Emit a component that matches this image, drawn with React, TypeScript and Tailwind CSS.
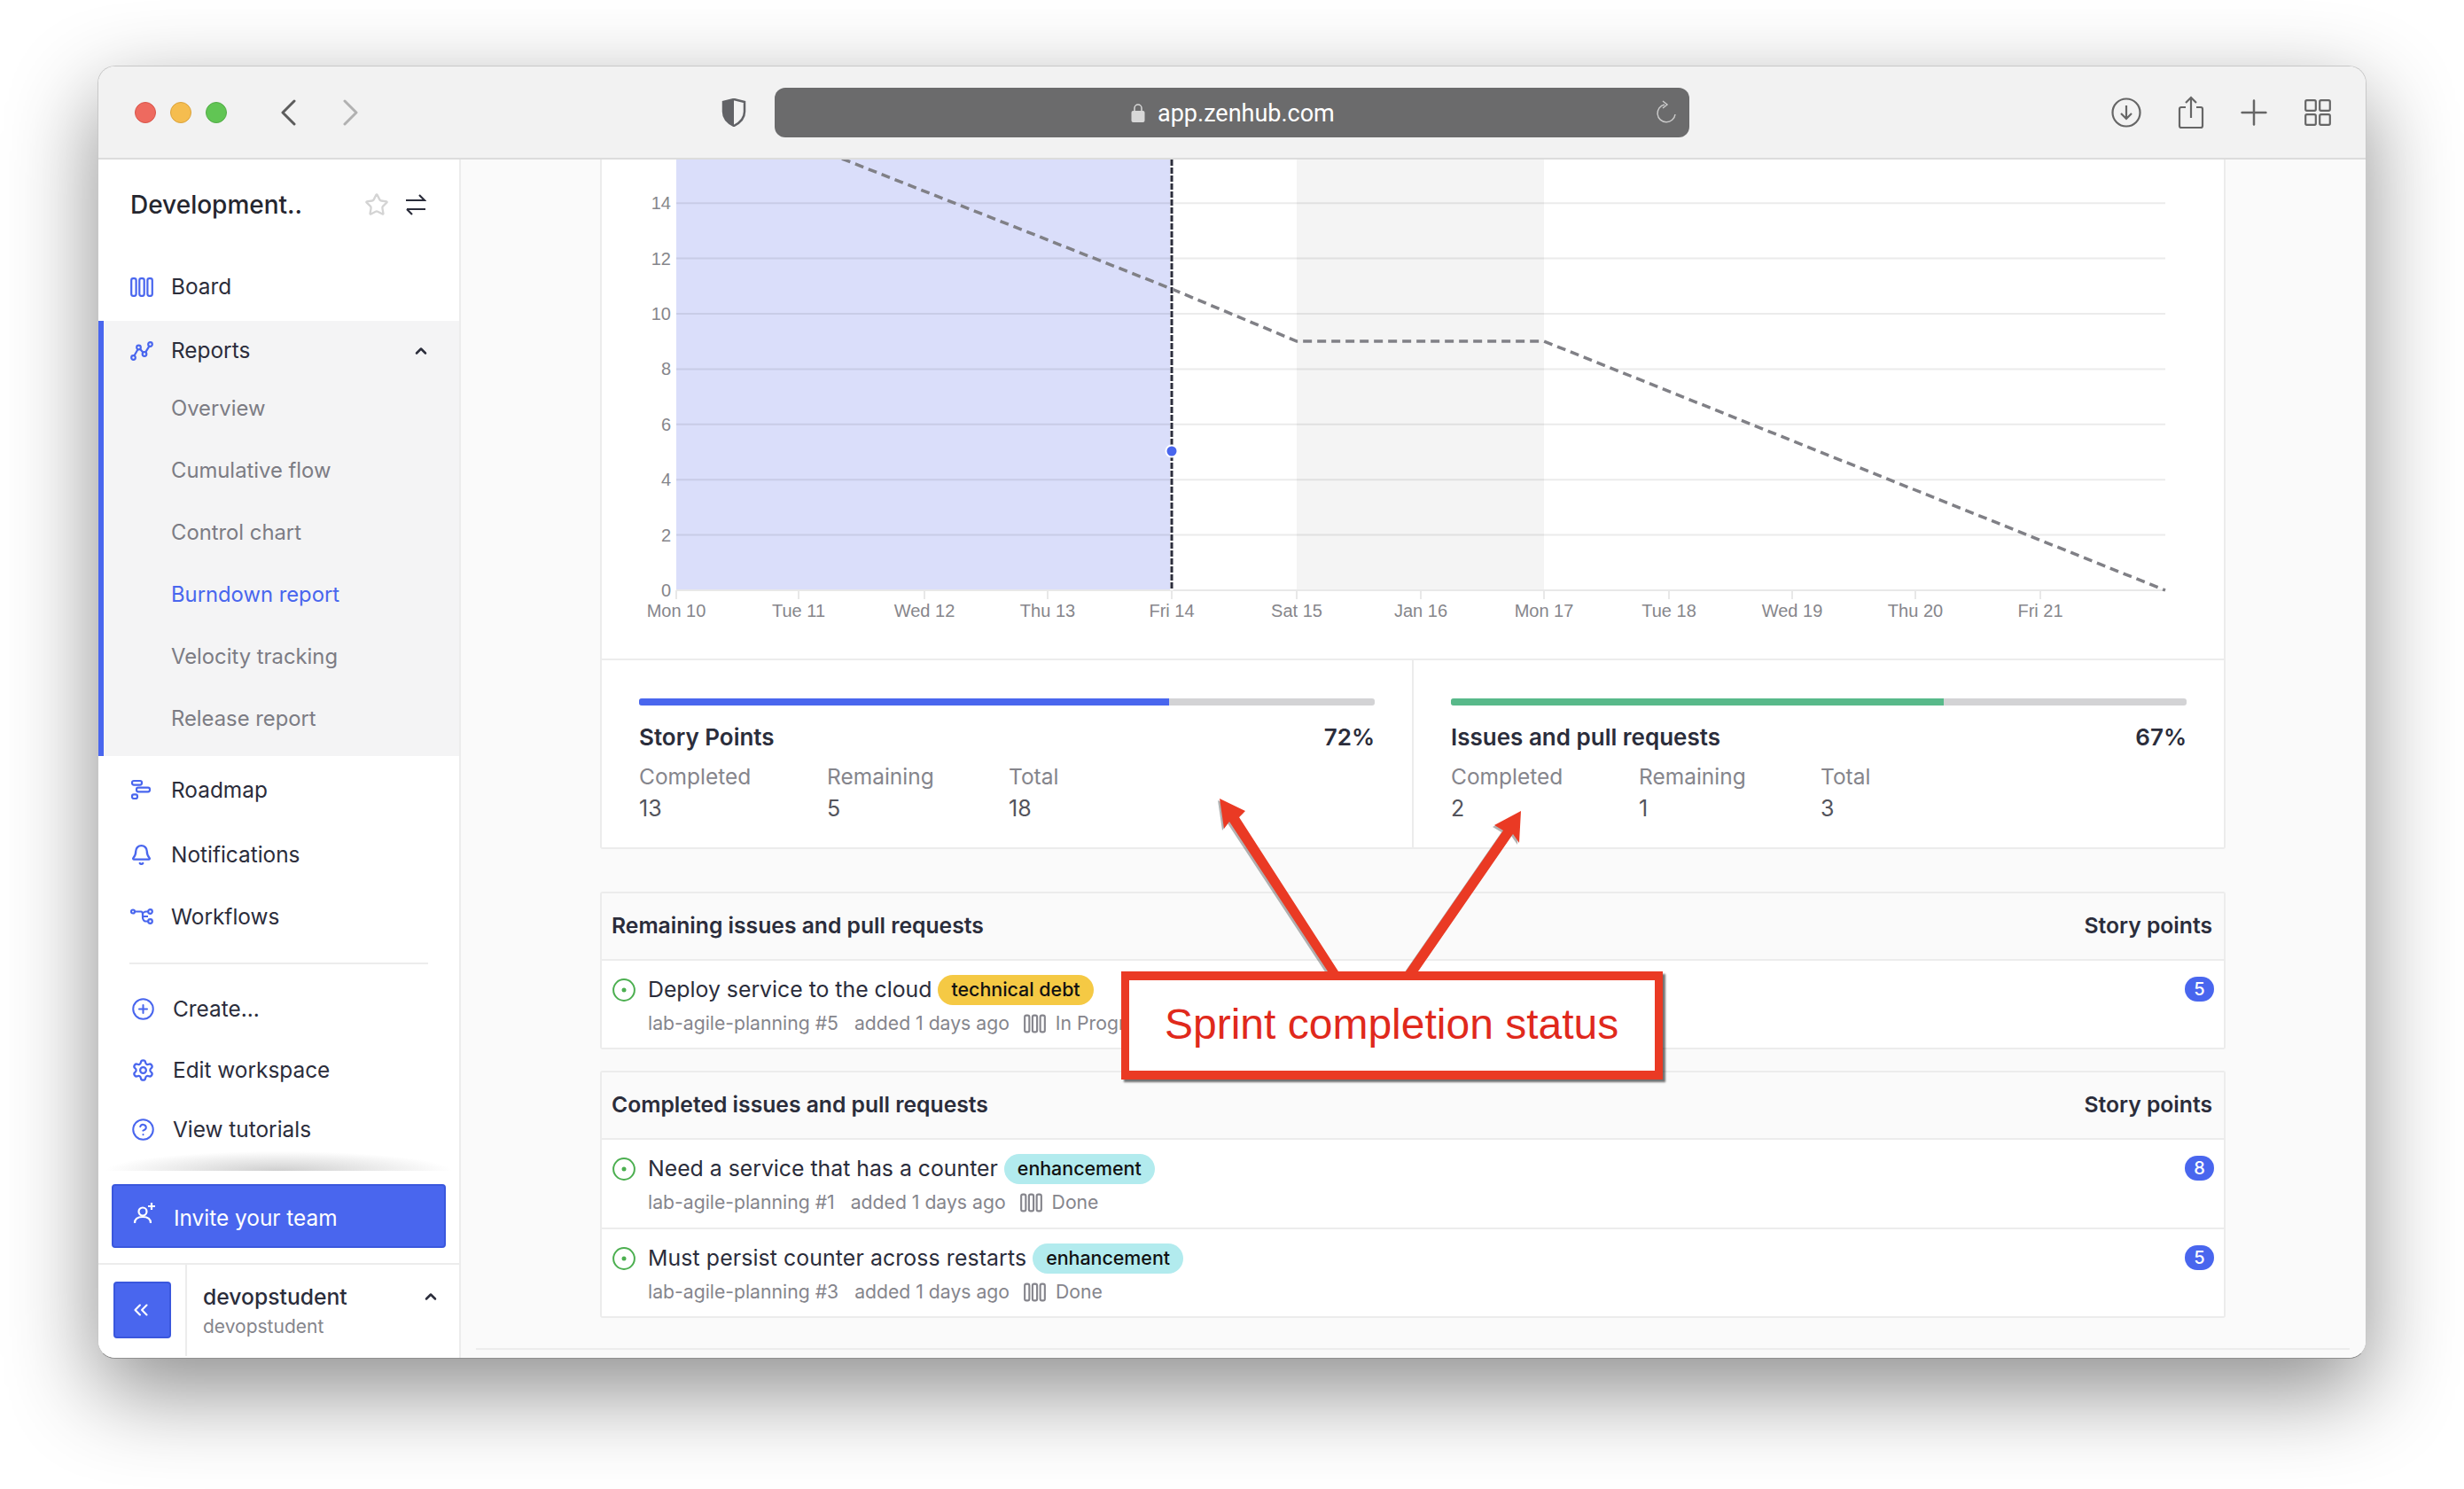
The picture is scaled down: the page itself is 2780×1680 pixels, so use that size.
import React from 'react';
import { Bell, ChevronUp, ChevronsLeft, CircleHelp, CirclePlus, Plus, Settings, Star } from 'lucide-react';

const ticks = [
    ['Mon 10', 763], ['Tue 11', 901], ['Wed 12', 1043], ['Thu 13', 1182], ['Fri 14', 1322], ['Sat 15', 1463],
    ['Jan 16', 1603], ['Mon 17', 1742], ['Tue 18', 1883], ['Wed 19', 2022], ['Thu 20', 2161], ['Fri 21', 2302],
] as const;

const BoardIcon = ({ className = '' }: { className?: string }) => (
    <svg viewBox="0 0 26 22" fill="none" stroke="currentColor" strokeWidth="2.2" className={className}>
        <rect x="1.2" y="1.2" width="5.4" height="19.6" rx="2" />
        <rect x="10.3" y="1.2" width="5.4" height="19.6" rx="2" />
        <rect x="19.4" y="1.2" width="5.4" height="19.6" rx="2" />
    </svg>
);

const ReportsIcon = () => (
    <svg viewBox="0 0 26 22" fill="none" stroke="#4966ee" strokeWidth="2.2" className="w-[26px] h-[22px]">
        <circle cx="3.5" cy="18.5" r="2.3" />
        <circle cx="9.5" cy="7" r="2.3" />
        <circle cx="16" cy="14.5" r="2.3" />
        <circle cx="22.5" cy="3.5" r="2.3" />
        <path d="M4.5 16.3 8.5 9.2M11 8.8l3.5 3.9M17.2 12.4l4.2-6.8" />
    </svg>
);

const RoadmapIcon = () => (
    <svg viewBox="0 0 24 24" fill="none" stroke="#4966ee" strokeWidth="2.2" className="w-6 h-6">
        <rect x="2" y="2" width="11" height="4.6" rx="2" />
        <rect x="7" y="9.7" width="15" height="4.6" rx="2" />
        <rect x="2" y="17.4" width="6" height="4.6" rx="2" />
    </svg>
);

const WorkflowIcon = () => (
    <svg viewBox="0 0 26 18" fill="none" stroke="#4966ee" strokeWidth="2.2" className="w-[26px] h-[18px]">
        <circle cx="3" cy="3.5" r="2" />
        <circle cx="22.5" cy="3.5" r="2.3" />
        <circle cx="22.5" cy="14.5" r="2.3" />
        <path d="M5 3.5h7c2 0 2 2 2 3.5v3c0 3 2 4.500 3 4.500h3M14 7c0-2 2-3.500 4-3.500h2M14 9h6" />
    </svg>
);

const IssueDot = () => (
    <svg viewBox="0 0 26 26" className="w-[26px] h-[26px] shrink-0">
        <circle cx="13" cy="13" r="11.900" fill="none" stroke="#4caf50" strokeWidth="2" />
        <circle cx="13" cy="13" r="2.500" fill="#4caf50" />
    </svg>
);

const NavRow = ({ icon, label, h }: { icon: React.ReactNode; label: string; h: string }) => (
    <div className={`flex items-center ${h} pl-[36px] text-[24.400px] text-[#2b2d3b]`}>
        <span className="w-[46px] flex items-center">{icon}</span>
        {label}
    </div>
);

const ActionRow = ({ icon, label, h }: { icon: React.ReactNode; label: string; h: string }) => (
    <div className={`flex items-center ${h} pl-[37px] text-[24.400px] text-[#2b2d3b]`}>
        <span className="w-[47px] flex items-center">{icon}</span>
        {label}
    </div>
);

const Sidebar = () => (
    <aside className="w-[409px] shrink-0 flex flex-col bg-white border-r-2 border-[#ececec]">
        <div className="h-[102px] flex items-center pl-[36px] pr-[37px]">
            <span className="text-[28px] font-medium text-[#25262f]">Development..</span>
            <Star className="ml-auto text-[#d4d4d4]" size={28} strokeWidth={2} />
            <svg viewBox="0 0 24 24" fill="none" stroke="#2b2d3b" strokeWidth="2.2" className="w-6 h-[28px] ml-[18px]">
                <path d="M1 7h21M16 1l6 6-6 0M23 17H2M8 23l-6-6" />
            </svg>
        </div>
        <NavRow icon={<BoardIcon className="w-[26px] h-[22px] text-[#4966ee]" />} label="Board" h="h-[80px] pt-[3px]" />
        <div className="border-l-[6px] border-[#4966ee] bg-[#f4f4f5] pb-[7px]">
            <div className="h-[64px] flex items-center pl-[30px] pr-[33px] pt-[3px] text-[24.400px] text-[#2b2d3b]">
                <span className="w-[46px] flex items-center"><ReportsIcon /></span>
                Reports
                <ChevronUp className="ml-auto" size={20} strokeWidth={3} />
            </div>
            {['Overview', 'Cumulative flow', 'Control chart', 'Burndown report', 'Velocity tracking', 'Release report'].map((item) => (
                <div key={item} className={`h-[70px] flex items-center pl-[76px] text-[23.800px] ${item === 'Burndown report' ? 'text-[#4966ee]' : 'text-[#7c7c84]'}`}>
                    {item}
                </div>
            ))}
        </div>
        <NavRow icon={<RoadmapIcon />} label="Roadmap" h="h-[76px]" />
        <NavRow icon={<Bell className="text-[#4966ee]" size={25} strokeWidth={2.2} />} label="Notifications" h="h-[70px]" />
        <NavRow icon={<WorkflowIcon />} label="Workflows" h="h-[70px]" />
        <div className="mt-[17px] mx-[35px] h-[2px] bg-[#ececec]" />
        <div className="mt-[16px]">
            <ActionRow icon={<CirclePlus className="text-[#4966ee]" size={27} strokeWidth={1.800} />} label="Create..." h="h-[68px]" />
            <ActionRow icon={<Settings className="text-[#4966ee]" size={27} strokeWidth={2} />} label="Edit workspace" h="h-[70px]" />
            <ActionRow icon={<CircleHelp className="text-[#4966ee]" size={27} strokeWidth={1.800} />} label="View tutorials" h="h-[64px]" />
        </div>
        <div className="-mt-[7px] h-[22px] mx-[8px] bg-[radial-gradient(ellipse_50%_100%_at_50%_100%,#cfcfcf,transparent)]" />
        <button className="mt-[15px] mx-[15px] h-[72px] flex items-center pl-[22px] rounded-[4px] bg-[#4966ee] border-2 border-[#3a57dd] text-[24.400px] text-white">
            <svg viewBox="0 0 26 26" fill="none" stroke="white" strokeWidth="2.200" className="w-[26px] h-[26px] mr-[20px] -mt-[6px]">
                <circle cx="11" cy="11" r="4.500" />
                <path d="M2 24c0-5 4-7 9-7s9 2 9 7M21 1v8M17 5h8" />
            </svg>
            <span className="mt-[4px]">Invite your team</span>
        </button>
        <div className="mt-[17px] flex flex-1 border-t-2 border-[#ececec]">
            <div className="w-[98px] shrink-0 pt-[19px] pl-[17px]">
                <div className="w-[65px] h-[64px] flex items-center justify-center rounded-[4px] bg-[#4966ee] border-2 border-[#3a57dd] pr-1 text-white">
                    <ChevronsLeft size={26} strokeWidth={2} />
                </div>
            </div>
            <div className="w-[2px] mb-[2px] bg-[#ececec]" />
            <div className="flex-1 pl-[18px] pr-[22px] pt-[19px]">
                <div className="flex items-center justify-between text-[24.700px] font-medium leading-[34px] text-[#2b2d3b]">
                    devopstudent
                    <ChevronUp size={20} strokeWidth={3} />
                </div>
                <div className="text-[21px] leading-[30px] text-[#85858c] mt-[2px]">devopstudent</div>
            </div>
        </div>
    </aside>
);

const BurndownChart = () => (
    <svg viewBox="679 180 1830 563" className="block w-[1830px] h-[563px] font-['Liberation_Sans',sans-serif]">
        <rect x="763" y="180" width="559" height="486" fill="#dadefa" />
        <rect x="1463" y="180" width="279" height="486" fill="#f4f4f4" />
        {[14, 12, 10, 8, 6, 4, 2, 0].map((v) => (
            <g key={v}>
                <line x1="763" x2="2443" y1={666 - v * 31.2} y2={666 - v * 31.2} stroke={v === 0 ? '#e8e8e8' : '#000'} strokeOpacity={v === 0 ? 1 : 0.08} strokeWidth="2" />
                <text x="757" y={666 - v * 31.2 + 7} textAnchor="end" fontSize="20" fill="#86868b">{v}</text>
            </g>
        ))}
        {ticks.map(([label, x]) => (
            <g key={label}>
                <line x1={x} x2={x} y1="666" y2="676" stroke="#e8e8e8" strokeWidth="2" />
                <text x={x} y="696" textAnchor="middle" fontSize="20" fill="#86868b">{label}</text>
            </g>
        ))}
        <polyline points="950,179 1322,326 1463,385 1742,385 2443,666" fill="none" stroke="#808086" strokeWidth="3.500" strokeDasharray="10 6" />
        <line x1="1322" x2="1322" y1="180" y2="666" stroke="#fff" strokeWidth="4" />
        <line x1="1322" x2="1322" y1="180" y2="666" stroke="#2b2d3b" strokeWidth="3" strokeDasharray="7 2" />
        <circle cx="1322" cy="509" r="6.500" fill="#4966ee" stroke="#fff" strokeWidth="2" />
    </svg>
);

const Stat = ({ title, pct, fill, color, values }: { title: string; pct: string; fill: string; color: string; values: string[] }) => (
    <div className="flex-1 px-[42px] pt-[43px]">
        <div className="h-2 rounded-[3px] bg-[#d3d3d5] overflow-hidden">
            <div className={`h-full ${fill} ${color}`} />
        </div>
        <div className="mt-[19px] flex justify-between text-[26px] leading-[34px] font-semibold text-[#2b2d3b]">
            <span>{title}</span>
            <span>{pct}</span>
        </div>
        <div className="mt-[12px] grid grid-cols-[212px_205px_1fr] text-[24.500px] leading-[30px] text-[#85858c]">
            <span>Completed</span>
            <span>Remaining</span>
            <span>Total</span>
        </div>
        <div className="mt-[6px] grid grid-cols-[212px_205px_1fr] text-[25px] leading-[30px] text-[#53545c]">
            {values.map((v) => <span key={v}>{v}</span>)}
        </div>
    </div>
);

const Issue = ({ title, titleClass = '', tag, tagColor, meta, added, column, points, border }: { title: string; titleClass?: string; tag: string; tagColor: string; meta: string; added: string; column: string; points: string; border?: boolean }) => (
    <div className={`flex pl-[12px] pr-[11px] bg-white ${border ? 'h-[101px] border-b-2 border-[#ececec]' : 'h-[98px]'}`}>
        <div className="flex-1 min-w-0">
            <div className="mt-[15px] h-[35px] flex items-center">
                <IssueDot />
                <span className={`ml-[14px] text-[24.800px] text-[#2b2d3b] ${titleClass}`}>{title}</span>
                <span className={`ml-[7px] h-[34px] px-[15px] flex items-center rounded-full text-[21.400px] font-medium text-[#111] ${tagColor}`}>{tag}</span>
            </div>
            <div className="mt-[6px] h-[30px] pl-[40px] flex items-center text-[21.200px] text-[#85858c]">
                <span>{meta}</span>
                <span className="ml-[18px]">{added}</span>
                <BoardIcon className="ml-[16px] mr-[11px] w-[25px] h-[22px]" />
                <span>{column}</span>
            </div>
        </div>
        <span className="mt-[18px] w-[33px] h-[28px] flex items-center justify-center rounded-full bg-[#4966ee] text-[20px] font-medium text-white">{points}</span>
    </div>
);

const IssueCard = ({ heading, className, children }: { heading: string; className: string; children: React.ReactNode }) => (
    <section className={`border-2 border-[#ececec] rounded-[3px] ${className}`}>
        <div className="h-[76px] flex items-center justify-between pl-[11px] pr-[13px] bg-[#fafafa] border-b-2 border-[#ececec] text-[24.700px] font-semibold text-[#2b2d3b]">
            <span>{heading}</span>
            <span>Story points</span>
        </div>
        {children}
    </section>
);

const Toolbar = () => (
    <header className="h-[105px] shrink-0 flex items-center bg-[#f2f2f2] border-b-2 border-[#dcdcdc]">
        <div className="ml-[41px] flex gap-4">
            <span className="w-6 h-6 rounded-full bg-[#ee6a5f] border border-[#d8554a]" />
            <span className="w-6 h-6 rounded-full bg-[#f5bd4f] border border-[#dba33c]" />
            <span className="w-6 h-6 rounded-full bg-[#61c554] border border-[#52ab47]" />
        </div>
        <svg viewBox="0 0 20 30" fill="none" stroke="#5c5c5c" strokeWidth="3" strokeLinecap="round" strokeLinejoin="round" className="ml-[59px] w-5 h-[30px]">
            <path d="M17 2 4 15l13 13" />
        </svg>
        <svg viewBox="0 0 20 30" fill="none" stroke="#b1b1b1" strokeWidth="3" strokeLinecap="round" strokeLinejoin="round" className="ml-[51px] w-5 h-[30px]">
            <path d="m3 2 13 13L3 28" />
        </svg>
        <svg viewBox="0 0 28 32" className="ml-[408px] w-[28px] h-[32px]">
            <path d="M14 1 2 4v11c0 8 6 13 12 16 6-3 12-8 12-16V4z" fill="none" stroke="#626367" strokeWidth="2.500" />
            <path d="M14 1 2 4v11c0 8 6 13 12 16z" fill="#626367" />
        </svg>
        <div className="ml-[32px] w-[1032px] h-[56px] flex items-center rounded-[12px] bg-[#6b6b6c] pl-[402px] pr-[14px] text-white">
            <svg viewBox="0 0 16 22" className="w-4 h-[22px] text-[#d8d8d8]">
                <path d="M4 10V6a4 4 0 0 1 8 0v4" fill="none" stroke="currentColor" strokeWidth="1.500" />
                <rect x="0.500" y="9" width="15" height="13" rx="2" fill="currentColor" />
            </svg>
            <span className="ml-[14px] mt-[3px] text-[27px] font-[Roboto,sans-serif]">app.zenhub.com</span>
            <svg viewBox="0 0 24 28" fill="none" stroke="#c9c9c9" strokeWidth="1.500" className="ml-auto w-6 h-7">
                <path d="M10 5a10 10 0 1 0 12 11M8 1l5 4-5 4" />
            </svg>
        </div>
        <svg viewBox="0 0 34 34" fill="none" stroke="#666" strokeWidth="2.200" className="ml-[476px] w-[34px] h-[34px]">
            <circle cx="17" cy="17" r="15.500" />
            <path d="M17 9v15M11 18l6 6 6-6" />
        </svg>
        <svg viewBox="0 0 30 38" fill="none" stroke="#666" strokeWidth="2.200" className="ml-[41px] w-[30px] h-[38px]">
            <path d="M9 13H4a2 2 0 0 0-2 2v19a2 2 0 0 0 2 2h22a2 2 0 0 0 2-2V15a2 2 0 0 0-2-2h-5M15 25V2M9 8l6-6 6 6" />
        </svg>
        <Plus className="ml-[33px] text-[#666]" size={46} strokeWidth={1.300} />
        <svg viewBox="0 0 30 30" fill="none" stroke="#666" strokeWidth="2.200" className="ml-[34px] w-[30px] h-[30px]">
            <rect x="1.200" y="1.200" width="11.600" height="11.600" rx="1.500" />
            <rect x="17.200" y="1.200" width="11.600" height="11.600" rx="1.500" />
            <rect x="1.200" y="17.200" width="11.600" height="11.600" rx="1.500" />
            <rect x="17.200" y="17.200" width="11.600" height="11.600" rx="1.500" />
        </svg>
    </header>
);

const Annotation = () => (
    <>
        <svg viewBox="0 0 2780 1680" className="absolute inset-0 w-[2780px] h-[1680px] pointer-events-none">
            <g fill="#555" opacity="0.45" transform="translate(-2 2)">
                <polygon points="1376,901 1405,915 1398,922 1510,1096 1498,1096 1387,927 1381,935" />
                <polygon points="1716,915 1686,931 1696,937 1586,1096 1600,1096 1707,941 1714,951" />
            </g>
            <g fill="#ea3a24">
                <polygon points="1376,901 1405,915 1398,922 1510,1096 1498,1096 1387,927 1381,935" />
                <polygon points="1716,915 1686,931 1696,937 1586,1096 1600,1096 1707,941 1714,951" />
            </g>
        </svg>
        <div className="absolute left-[1265px] top-[1096px] w-[611px] h-[122px] flex items-center pl-[40px] pb-[3px] bg-white border-x-[9px] border-y-[10px] border-[#ea3a24] shadow-[3px_3px_2px_rgba(0,0,0,0.55)] font-['Liberation_Sans',sans-serif] text-[48px] text-[#e0291c]">
            Sprint completion status
        </div>
    </>
);

export default function App() {
    return (
        <div className="relative w-[2780px] h-[1680px] overflow-hidden bg-white pl-[110px] pt-[74px] font-[Inter,sans-serif]">
            <div className="w-[2560px] h-[1459px] flex flex-col overflow-hidden rounded-[20px] border border-[#c8c8c8] border-b-[#8f8f8f] bg-white shadow-[0_36px_100px_rgba(0,0,0,0.45)]">
                <Toolbar />
                <div className="flex flex-1 min-h-0">
                    <Sidebar />
                    <main className="flex-1 min-w-0 bg-[#fafafa] pl-[157px] pr-[158px] overflow-hidden">
                        <div className="border-x-2 border-b-2 border-[#ececec] bg-white rounded-b-[3px]">
                            <BurndownChart />
                            <div className="h-[213px] flex border-t-2 border-[#ececec]">
                                <Stat title="Story Points" pct="72%" fill="w-[72%]" color="bg-[#4966ee]" values={['13', '5', '18']} />
                                <div className="w-[2px] bg-[#ececec]" />
                                <Stat title="Issues and pull requests" pct="67%" fill="w-[67%]" color="bg-[#58b98a]" values={['2', '1', '3']} />
                            </div>
                        </div>
                        <IssueCard heading="Remaining issues and pull requests" className="mt-[48px]">
                            <Issue title="Deploy service to the cloud" tag="technical debt" tagColor="bg-[#f5c944]" meta="lab-agile-planning #5" added="added 1 days ago" column="In Progress" points="5" />
                        </IssueCard>
                        <IssueCard heading="Completed issues and pull requests" className="mt-[24px]">
                            <Issue title="Need a service that has a counter" tag="enhancement" tagColor="bg-[#b2ebee]" meta="lab-agile-planning #1" added="added 1 days ago" column="Done" points="8" border />
                            <Issue title="Must persist counter across restarts" titleClass="tracking-[0.12px]" tag="enhancement" tagColor="bg-[#b2ebee]" meta="lab-agile-planning #3" added="added 1 days ago" column="Done" points="5" />
                        </IssueCard>
                        <div className="mt-[34px] -mx-[140px] h-[2px] bg-[#ececec]" />
                    </main>
                </div>
            </div>
            <Annotation />
        </div>
    );
}
